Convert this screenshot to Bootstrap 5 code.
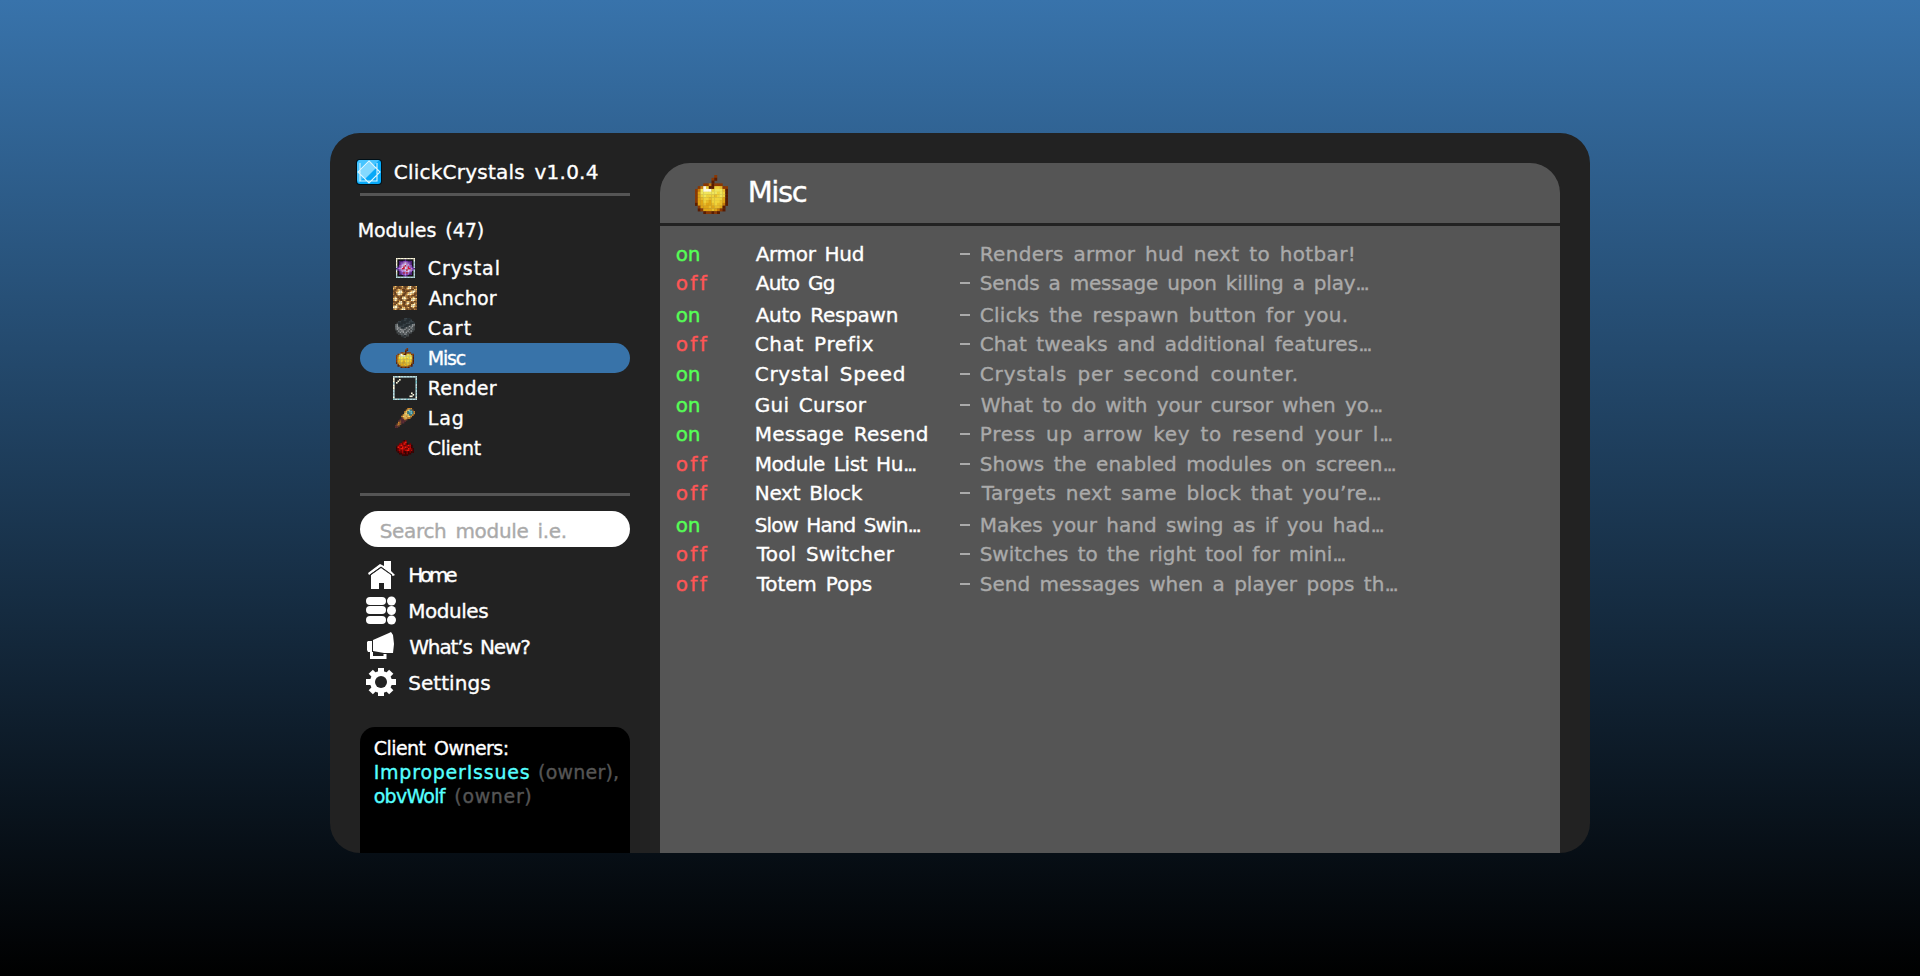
<!DOCTYPE html>
<html lang="en">
<head>
<meta charset="utf-8">
<meta name="viewport" content="width=device-width, initial-scale=1">
<title>ClickCrystals</title>
<link href="https://cdn.jsdelivr.net/npm/bootstrap@5.3.0/dist/css/bootstrap.min.css" rel="stylesheet">
<style>
html,body{height:100%}
body{font-family:"DejaVu Sans",sans-serif;font-size:20px;line-height:30px;color:#fff;background:linear-gradient(#3873ab,#000);overflow:hidden}
.window-box{width:1260px;height:720px;margin-top:133px;background:#222;border-radius:30px;overflow:hidden;padding:0 30px}
.side{width:270px}
.rule{height:3px;background:#555}
.rule-dark{background:#222}
.rule-gap{margin-top:30px}
.brand-row{height:60px;padding:26px 0 0 26px;margin-left:-30px}
.brand-row .fit{line-height:26px}
.fs-19{font-size:19px}
.count-row{height:57px;padding-top:19px}
.cat{height:30px;padding-left:33px;border-radius:15px}
.cat.active{background:#3873a9}
.cat-icon{width:24px;height:24px}
.search-pill{height:36px;margin-top:15px;border-radius:18px;padding-left:20px;color:#aaa;line-height:40px}
.main-nav{margin-top:10px}
.nav-row{height:36px;padding-left:6px}
.nav-row .fit{margin-top:-1px}
.owners{height:126px;background:#000;border-radius:15px 15px 0 0;padding:9px 0 0 14px;line-height:24px}
.main-panel{width:900px;margin-top:30px;background:#555;border-radius:30px 30px 0 0}
.panel-head{height:60px;padding:12px 0 0 35px}
.title-text{font-size:29px;margin-left:21px;line-height:34px}
.module-rows{padding:13px 0 0 16px}
.c-state{width:79px}.c-name{width:205px}.c-dash{width:20px}
.dash{width:10px;height:2px;margin-top:14px;background:#aaa}
.on{color:#5f5}.off{color:#f55}.aqua{color:#5ff}.gray{color:#555}.desc{color:#aaa}
.fit{display:block;white-space:pre;-webkit-text-stroke:.35px currentColor}
.fit i{font-style:normal;letter-spacing:-2.3px}
</style>
</head>
<body>
<div class="window-box d-flex justify-content-between mx-auto">
  <aside class="side d-flex flex-column">
    <div class="brand-row d-flex">
      <svg width="26" height="26" viewBox="0 0 26 26" class="flex-shrink-0"><rect width="26" height="26" rx="4" fill="#001018"/><rect x="1" y="1" width="24" height="24" rx="3" fill="#07a9f8"/><path d="M3 1h20L3 24l-2-3V4z" fill="#46c4ff"/><path d="M13 3l7 6L9 20l-6-7z" fill="#83d9ff"/><path d="M4 4v18h17V4M13 2l11 11-11 11L2 13z" fill="none" stroke="#d8f5ff" stroke-width="1.1"/></svg>
      <span class="fit" data-w="204" data-x="12">ClickCrystals v1.0.4</span>
    </div>
    <div class="rule"></div>
    <div class="fs-19 count-row"><span class="fit" data-w="125" data-x="-2">Modules (47)</span></div>
    <nav id="cats" class="fs-19"></nav>
    <div class="rule rule-gap"></div>
    <div class="search-pill bg-white"><span class="fit" data-w="186" data-x="0">Search module i.e.</span></div>
    <nav class="main-nav">
      <div class="nav-row d-flex align-items-center"><svg width="30" height="30" fill="#fff"><path d="M18 1h7v10l4 4-2 1-12-9L3 15l-1-2L14 4l4 2z"/><path d="M15 8l10 7v14h-7v-6h-5v6H5V15z"/><path d="M4 15L15 7l11 8" fill="none" stroke="#222"/></svg><span class="fit" data-w="49" data-x="12.5">Home</span></div>
      <div class="nav-row d-flex align-items-center"><svg width="30" height="30" fill="#fff"><rect y="1" width="20" height="8" rx="4"/><rect y="10" width="20" height="8" rx="4"/><rect y="20" width="20" height="8" rx="4"/><circle cx="25.5" cy="5" r="4.5"/><circle cx="25.5" cy="14.5" r="4.5"/><circle cx="25.5" cy="24" r="4.5"/></svg><span class="fit" data-w="80" data-x="12.5">Modules</span></div>
      <div class="nav-row d-flex align-items-center"><svg width="30" height="30" fill="#fff"><path d="M2 9h4v11H2l-1-2v-8zM7 8L23 1l2-1 2 3 1 9-1 9h-9L7 19z"/><path d="M5.500 20v5.500H19V22" fill="none" stroke="#fff" stroke-width="3"/></svg><span class="fit" data-w="122" data-x="12.5">What’s New?</span></div>
      <div class="nav-row d-flex align-items-center"><svg width="30" height="30" viewBox="-15 -14 30 30"><g fill="#fff"><circle r="11"/><rect x="-3" y="-14" width="6" height="28"/><rect x="-15" y="-3" width="30" height="6"/><g transform="rotate(45)"><rect x="-3" y="-14.500" width="6" height="29"/><rect x="-14.500" y="-3" width="29" height="6"/></g></g><circle r="6" fill="#222"/></svg><span class="fit" data-w="82" data-x="12.5">Settings</span></div>
    </nav>
    <div class="owners fs-19 mt-auto">
      <span class="fit" data-w="134">Client Owners:</span>
      <div class="d-flex"><span class="fit aqua" data-w="155">ImproperIssues</span><span class="fit gray" data-w="80" data-x="8">(owner),</span></div>
      <div class="d-flex"><span class="fit aqua" data-w="73">obvWolf</span><span class="fit gray" data-w="76" data-x="10">(owner)</span></div>
    </div>
  </aside>
  <main class="main-panel">
    <div class="panel-head d-flex"><svg class="apple" width="33" height="39"></svg><div class="title-text"><span class="fit" data-w="58" data-x="0">Misc</span></div></div>
    <div class="rule rule-dark"></div>
    <div id="rows" class="module-rows"></div>
  </main>
</div>
<script src="https://cdn.jsdelivr.net/npm/bootstrap@5.3.0/dist/js/bootstrap.bundle.min.js"></script>
<script>
const palette={K:'#5a1c00',B:'#8a3803',O:'#c47a0b',G:'#dfa516',H:'#e8bc2a',Y:'#f0d33a',L:'#f0e55a',W:'#fffbe0',
 p:'#512080',q:'#9152c8',r:'#c08ae0',s:'#e3c6f3',R:'#df1535',a:'#b8dce0',b:'#111',
 c:'#262f34',d:'#3b464c',e:'#626a6d',f:'#969a9c',g:'#454a4c',
 u:'#5a2c34',v:'#85502f',w:'#d58a2c',x:'#f8d36b',y:'#36828c',z:'#78c5cc',
 m:'#3a0000',n:'#780000',o:'#b80505',t:'#f01a0c',
 A:'#68411f',C:'#8f5e2e',D:'#bd8444',E:'#f6c66e',F:'#fff3c8'};
const sprites={
 apple:['.......B....','......BK....','......K.....','...BBOKBBB..','.BOWYKKYYHBB','BOLWWWYLLLHK','BGLLLLLLYLYK','BGYLYYYHYLYK','BGHYYHYYYYGK','BGGYHGYYYHGK','KGGHGGHYHHOK','.BGGGHGHHGK.','.KBGGGHGOBK.','...KBBKBK...'],
 crystal:['WWWWWWWWWWWWW','WbbbbbpbbbbbW','Wbpppqqqpppba','Wbpqqrsrqqpba','Wbpqrssrrqpba','WbqrssRsrrqba','apqrsRssRrqpa','pqrsRRssRRrqp','apqrrssRssrqa','Wbpqrrrssrqba','WbpqqRrRrqpba','abppqqrqqppba','abbbbpqpbbbba','aaaaaaaaaaaaa'],
 anchor:['CEDACDEAACEFDACE','EDACACDCAEFFCDAD','DACEEDAACDDCAAEE','ACDEFFDACAADEFFD','CAEFFFECADEFFFDC','DACFFECACEFFEDAC','ACADDCAADDCDCAAD','CEDACAEFECADCEDA','EFFCACFFFDCAEFFE','DFECDACEDAACFFED','ACCAEFCACEEDCDAC','DCAEFFDACFFCACED','CAEDEECADEDAEFFC','EFFCACDCACACFFED','FFFDCAEECDEACECA','CEDACEFFDACCAADC'],
 cart:['......ddcc...','....ccdcccd..','..ddcccccddd.','.gcccccdddccd','efcccddcccdff','efgdddccdfefg','effeccdfegfeg','gfeffefgefgeg','.gfeffgefgfg.','.ggfefefgeg..','..ggegfeg....','....ggcgg....','.....cg......'],
 glass:['aaaaWaaaaaaaaaaa','W..............a','W...W..........a','W..W...........z','a.W............z','a..............a','W..............a','W..............a','W..............z','a..............a','a..............a','a...........W..a','a............W.a','a..........WW..a','W..............W','zaaazaaaazaaaaaa'],
 spy:['........www..','.......wxzyv.','......wxyzzyw','......xxyyzyw','.....wxxxyyw.','....wxxwxxw..','....uwxxww...','...uuuwv.....','..uvuuu......','..wvuu.......','.vwv.........','uvv..........','uu...........'],
 dust:['.....mn.....','....not.....','..nontom.n..','.notonnotom.','mtontotonom.','mnottonntonm','mnononottnom','.mnnommnmnmm','..mmnnmnmm..','....mmmm....']};
function sprite(name,w,h){
 const g=sprites[name],c=g[0].length;
 let s='';
 g.forEach((r,y)=>[...r].forEach((k,x)=>{if(palette[k])s+=`<rect x="${x}" y="${y}" width="1.08" height="1.08" fill="${palette[k]}"/>`}));
 return `<svg width="${w}" height="${h}" viewBox="0 0 ${c} ${g.length}" preserveAspectRatio="none">${s}</svg>`;
}
document.querySelector('.apple').outerHTML=sprite('apple',33,39);
cats.innerHTML=[['Crystal','crystal',19,20,71],['Anchor','anchor',24,24,69],['Cart','cart',20,20,43],['Misc','apple',18,20,38],['Render','glass',24,24,69],['Lag','spy',20,20,35],['Client','dust',18,16,53]]
 .map(([n,i,w,h,t])=>`<div class="cat d-flex align-items-center ${n=='Misc'?'active':''}"><span class="cat-icon d-flex align-items-center justify-content-center">${sprite(i,w,h)}</span><span class="fit" data-w="${t}" data-x="11">${n}</span></div>`).join('');
const modules=[
 [1,'Armor Hud',108,'Renders armor hud next to hotbar!',373,29],
 [0,'Auto Gg',79,'Sends a message upon killing a play...',390,32],
 [1,'Auto Respawn',142,'Clicks the respawn button for you.',367,29],
 [0,'Chat Prefix',119,'Chat tweaks and additional features...',392,30],
 [1,'Crystal Speed',149,'Crystals per second counter.',317,31],
 [1,'Gui Cursor',112,'What to do with your cursor when yo...',403,29],
 [1,'Message Resend',172,'Press up arrow key to resend your l...',411,30],
 [0,'Module List Hu...',161,'Shows the enabled modules on screen...',415,29],
 [0,'Next Block',108,'Targets next same block that you’re...',401,32],
 [1,'Slow Hand Swin...',166,'Makes your hand swing as if you had...',403,29],
 [0,'Tool Switcher',140,'Switches to the right tool for mini...',365,30],
 [0,'Totem Pops',117,'Send messages when a player pops th...',417,30]];
rows.innerHTML=modules.map(([s,n,w,d,dw,h])=>`<div class="d-flex" style="height:${h}px"><div class="c-state"><span class="fit ${s?'on':'off'}" data-w="${s?23:32}">${s?'on':'off'}</span></div><div class="c-name"><span class="fit" data-w="${w}">${n}</span></div><div class="c-dash"><div class="dash"></div></div><span class="fit desc" data-w="${dw}">${d}</span></div>`).join('');
// Track every label so its inked width equals data-w, starting data-x pixels in.
const ctx=document.createElement('canvas').getContext('2d');
document.querySelectorAll('.fit').forEach(el=>{
 const cs=getComputedStyle(el),fs=parseFloat(cs.fontSize);
 let text=el.textContent,target=+el.dataset.w-1,dots=text.endsWith('...');
 if(dots){text=text.slice(0,-3);target-=14}
 ctx.font=`${fs}px "DejaVu Sans"`;
 const m=ctx.measureText(text),spaces=text.split(' ').length-1,ws=3;
 const ink=m.actualBoundingBoxLeft+m.actualBoundingBoxRight+spaces*ws;
 el.style.wordSpacing=ws+'px';
 el.style.letterSpacing=(target-ink)/(text.length-1)+'px';
 el.style.marginLeft=(+(el.dataset.x||0)+m.actualBoundingBoxLeft+.7)+'px';
 if(dots)el.innerHTML=text+'<i>...</i>';
});
</script>
</body>
</html>
